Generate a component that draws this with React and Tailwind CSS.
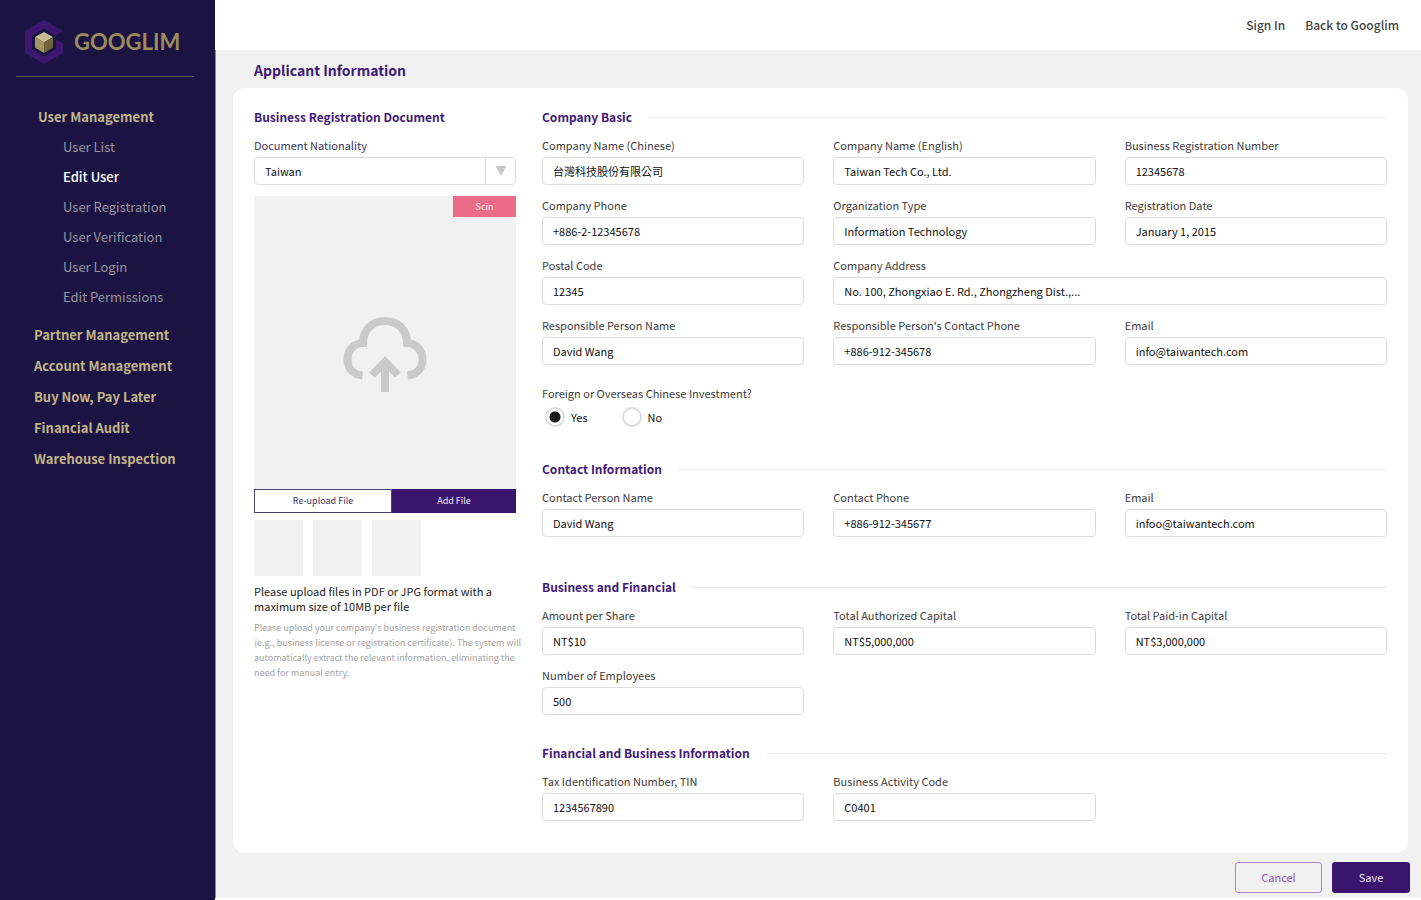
import React, { useState } from 'react';

const SUB_ITEMS = [
  'User List',
  'Edit User',
  'User Registration',
  'User Verification',
  'User Login',
  'Edit Permissions',
];

const MAIN_ITEMS = [
  'Partner Management',
  'Account Management',
  'Buy Now, Pay Later',
  'Financial Audit',
  'Warehouse Inspection',
];

function Logo() {
  return (
    <svg width="40" height="46" viewBox="0 0 40 46" aria-hidden="true">
      <path
        d="M20 1 L39 12 L31 17 L20 9.5 L8 16.500 V30 L20 37 L32 30 V25 L31 20 L39 24.500 V34 L20 45 L1 34 V12 Z"
        fill="#3c1770"
      />
      <path d="M20 10 L32 17 V30 L20 37 L8 30 V17 Z" fill="#1b1442" />
      <path d="M20 13 L29 18 L20 23.500 L11 18 Z" fill="#c9bb90" />
      <path d="M11 18 L20 23.500 V34 L11 28.500 Z" fill="#a39463" />
      <path d="M29 18 L20 23.500 V34 L29 28.500 Z" fill="#6f6338" />
    </svg>
  );
}

function Sidebar() {
  return (
    <aside className="w-[215px] shrink-0 bg-[#1b1442]">
      <div className="mr-[21px] ml-4 flex h-[77px] items-center gap-2.5 border-b border-[#5d585a] pt-2 pl-2">
        <Logo />
        <span className="font-['Lato',sans-serif] text-[22px] leading-7 font-bold text-[#9c8c5c]">GOOGLIM</span>
      </div>

      <nav className="pt-[25px] text-[13px]">
        <a href="#user-management" className="block pl-[38px] leading-[30px] font-bold text-[#c2b48a]">
          User Management
        </a>
        <ul className="pl-[63px] leading-[30px]">
          {SUB_ITEMS.map((item) => (
            <li key={item}>
              <a href="#users" className={item === 'Edit User' ? 'font-medium text-white' : 'text-[#98959f]'}>
                {item}
              </a>
            </li>
          ))}
        </ul>
        <ul className="pt-[7px] pl-[34px] leading-[31px] font-bold text-[#c2b48a]">
          {MAIN_ITEMS.map((item) => (
            <li key={item}>
              <a href="#section">{item}</a>
            </li>
          ))}
        </ul>
      </nav>
    </aside>
  );
}

function Field({ id, label, value, className = '' }) {
  return (
    <div className={className}>
      <label htmlFor={id} className="mb-1 block text-[11px] leading-4 text-[#3c3c3c]">
        {label}
      </label>
      <input
        id={id}
        type="text"
        defaultValue={value}
        className="block h-7 w-full rounded-[4px] border border-[#dcdcdc] bg-white px-2.5 text-[11px] text-[#111] outline-none"
      />
    </div>
  );
}

function Section({ title, className = '', children }) {
  return (
    <section className={className}>
      <div className="mb-2.5 flex items-center gap-4">
        <h2 className="text-xs leading-5 font-bold text-[#3f1a78]">{title}</h2>
        <div className="h-px flex-1 bg-[#ececec]" />
      </div>
      <div className="grid grid-cols-3 gap-x-[29px] gap-y-3">{children}</div>
    </section>
  );
}

function Radio({ label, checked, onChange }) {
  return (
    <label className="flex items-center gap-1.5 text-[11px] leading-5 text-[#111]">
      <input
        type="radio"
        name="foreign-investment"
        checked={checked}
        onChange={onChange}
        className="size-5 appearance-none rounded-full border-2 border-[#dcdcdc] bg-white checked:bg-[radial-gradient(circle,#1a1a1a_5px,#fff_6px)]"
      />
      {label}
    </label>
  );
}

function UploadPanel() {
  return (
    <div className="w-[262px] shrink-0">
      <h2 className="mb-2.5 text-xs leading-5 font-bold text-[#3f1a78]">Business Registration Document</h2>
      <label htmlFor="nationality" className="mb-1 block text-[11px] leading-4 text-[#3d3560]">
        Document Nationality
      </label>
      <div className="flex h-7 items-stretch overflow-hidden rounded-[4px] border border-[#dcdcdc]">
        <select id="nationality" className="flex-1 appearance-none px-2.5 text-[11px] text-[#111] outline-none">
          <option>Taiwan</option>
        </select>
        <span className="pointer-events-none flex w-[30px] items-center justify-center border-l border-[#dcdcdc]">
          <svg width="12" height="10" viewBox="0 0 12 10" aria-hidden="true">
            <path d="M0.500 0 H11.500 L6 10 Z" fill="#c8c8c8" />
          </svg>
        </span>
      </div>

      <div className="mt-[11px] flex h-[293px] flex-col bg-[#f1f1f1]">
        <button type="button" className="h-[21px] w-[63px] self-end bg-[#eb6c87] text-[9px] text-[#fbe3e8]">
          Scin
        </button>
        <div className="flex flex-1 items-center justify-center pt-1">
          <svg width="84" height="78" viewBox="0 0 84 78" fill="none" stroke="#cacaca" strokeWidth="8">
            <path d="M19.500 59.500 C10 58.500 4.500 52 4.500 43.500 C4.500 34 11 27.500 20 27 L20 27 C20 14 29 5 42 5 C55 5 64 14 64 27 C73 27.500 79.500 34 79.500 43.500 C79.500 52 74 58.500 64.500 59.500" />
            <path d="M42 76 V46 M29 59 L42 46 L55 59" />
          </svg>
        </div>
      </div>
      <div className="flex h-6 text-[9px]">
        <button type="button" className="w-[138px] border border-[#4b4470] bg-white text-[#3d3560]">
          Re-upload File
        </button>
        <button type="button" className="flex-1 bg-[#3b156d] text-[#eee8f5]">
          Add File
        </button>
      </div>

      <div className="mt-[7px] flex gap-2.5">
        <div className="h-14 w-[49px] bg-[#f1f1f1]" />
        <div className="h-14 w-[49px] bg-[#f1f1f1]" />
        <div className="h-14 w-[49px] bg-[#f1f1f1]" />
      </div>
      <p className="mt-2 text-[11px] leading-[15px] text-[#222]">
        Please upload files in PDF or JPG format with a maximum size of 10MB per file
      </p>
      <p className="-mr-2 mt-1.5 text-[9px] leading-[15px] text-[#a3a3a3]">
        Please upload your company's business registration document (e.g., business license or registration
        certificate). The system will automatically extract the relevant information, eliminating the need for manual
        entry.
      </p>
    </div>
  );
}

export default function App() {
  const [foreign, setForeign] = useState('yes');

  return (
    <div className="flex min-h-screen bg-white font-['Noto_Sans_CJK_TC',sans-serif]">
      <Sidebar />

      <div className="flex min-w-0 flex-1 flex-col">
        <header className="flex h-[50px] items-center justify-end gap-5 pr-[22px] text-xs font-medium text-[#444]">
          <a href="#sign-in">Sign In</a>
          <a href="#home">Back to Googlim</a>
        </header>

        <main className="border-l border-[#8b879f] bg-[#f1f1f1] pr-[13px] pb-[5px] pl-[17px]">
          <h1 className="pt-2 pb-1.5 pl-[21px] text-sm leading-6 font-bold text-[#3f1a78]">Applicant Information</h1>

          <form className="flex gap-[26px] rounded-[12px] bg-white px-[21px] pt-[19px] pb-8">
            <UploadPanel />

            <div className="min-w-0 flex-1">
              <Section title="Company Basic">
                <Field id="name-zh" label="Company Name (Chinese)" value="台灣科技股份有限公司" />
                <Field id="name-en" label="Company Name (English)" value="Taiwan Tech Co., Ltd." />
                <Field id="reg-no" label="Business Registration Number" value="12345678" />
                <Field id="phone" label="Company Phone" value="+886-2-12345678" />
                <Field id="org-type" label="Organization Type" value="Information Technology" />
                <Field id="reg-date" label="Registration Date" value="January 1, 2015" />
                <Field id="postal" label="Postal Code" value="12345" />
                <Field
                  id="address"
                  label="Company Address"
                  value="No. 100, Zhongxiao E. Rd., Zhongzheng Dist.,..."
                  className="col-span-2"
                />
                <Field id="resp-name" label="Responsible Person Name" value="David Wang" />
                <Field id="resp-phone" label="Responsible Person's Contact Phone" value="+886-912-345678" />
                <Field id="resp-email" label="Email" value="info@taiwantech.com" />
              </Section>

              <fieldset className="mt-[19px]">
                <legend className="mb-[5px] text-[11px] leading-[18px] text-[#3c3c3c]">
                  Foreign or Overseas Chinese Investment?
                </legend>
                <div className="flex gap-[34px] pl-[3px]">
                  <Radio label="Yes" checked={foreign === 'yes'} onChange={() => setForeign('yes')} />
                  <Radio label="No" checked={foreign === 'no'} onChange={() => setForeign('no')} />
                </div>
              </fieldset>

              <Section title="Contact Information" className="mt-8">
                <Field id="contact-name" label="Contact Person Name" value="David Wang" />
                <Field id="contact-phone" label="Contact Phone" value="+886-912-345677" />
                <Field id="contact-email" label="Email" value="infoo@taiwantech.com" />
              </Section>

              <Section title="Business and Financial" className="mt-10">
                <Field id="share" label="Amount per Share" value="NT$10" />
                <Field id="authorized" label="Total Authorized Capital" value="NT$5,000,000" />
                <Field id="paid-in" label="Total Paid-in Capital" value="NT$3,000,000" />
                <Field id="employees" label="Number of Employees" value="500" />
              </Section>

              <Section title="Financial and Business Information" className="mt-7">
                <Field id="tin" label="Tax Identification Number, TIN" value="1234567890" />
                <Field id="activity" label="Business Activity Code" value="C0401" />
              </Section>
            </div>
          </form>

          <div className="-mr-0.5 flex justify-end gap-2.5 pt-[9px] text-[11px]">
            <button type="button" className="h-[31px] w-[87px] rounded-[3px] border border-[#a886c8] text-[#8a58b0]">
              Cancel
            </button>
            <button type="button" className="h-[31px] w-[78px] rounded-[3px] bg-[#3b156d] text-[#eee8f5]">
              Save
            </button>
          </div>
        </main>
      </div>
    </div>
  );
}
